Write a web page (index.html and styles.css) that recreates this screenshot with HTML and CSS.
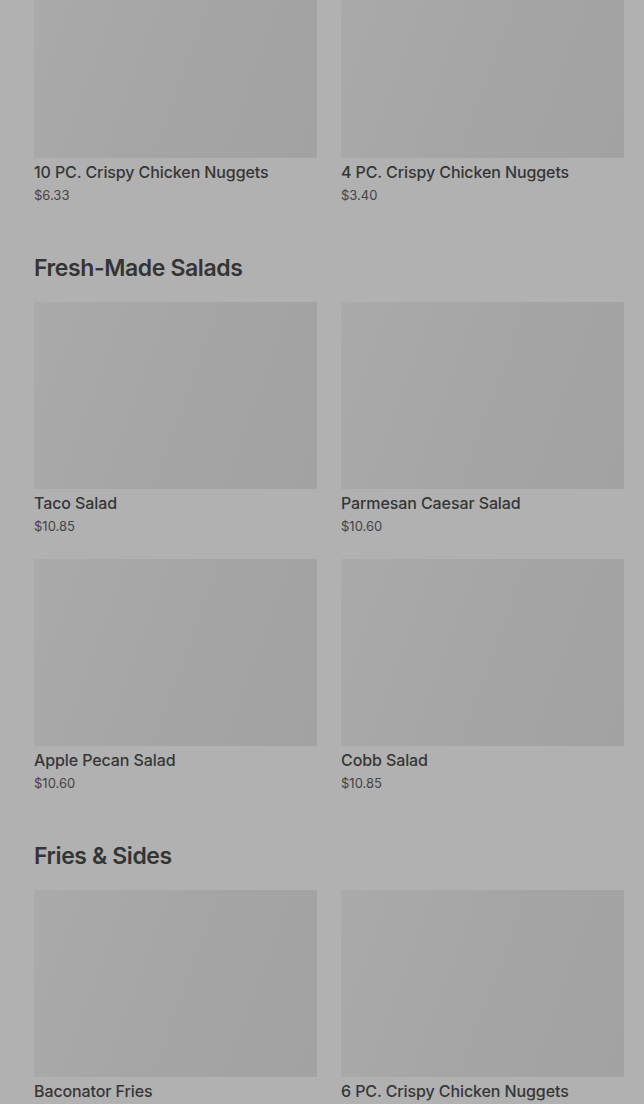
FILE: index.html
```html
<!DOCTYPE html>
<html lang="en">
<head>
    <meta charset="UTF-8">
    <meta name="viewport" content="width=device-width, initial-scale=1.0">
    <title>Menu</title>
    <link rel="stylesheet" href="styles.css">
</head>
<body>
    <!-- Menu list, scrolled part way down -->
    <div class="menu">
        <div class="grid first">
            <div class="item">
                <div class="thumb"></div>
                <div class="name">10 PC. Crispy Chicken Nuggets</div>
                <div class="price">$6.33</div>
            </div>
            <div class="item">
                <div class="thumb"></div>
                <div class="name">4 PC. Crispy Chicken Nuggets</div>
                <div class="price">$3.40</div>
            </div>
        </div>

        <h2 class="section-title">Fresh-Made Salads</h2>
        <div class="grid">
            <div class="item">
                <div class="thumb"></div>
                <div class="name">Taco Salad</div>
                <div class="price">$10.85</div>
            </div>
            <div class="item">
                <div class="thumb"></div>
                <div class="name">Parmesan Caesar Salad</div>
                <div class="price">$10.60</div>
            </div>
            <div class="item">
                <div class="thumb"></div>
                <div class="name">Apple Pecan Salad</div>
                <div class="price">$10.60</div>
            </div>
            <div class="item">
                <div class="thumb"></div>
                <div class="name">Cobb Salad</div>
                <div class="price">$10.85</div>
            </div>
        </div>

        <h2 class="section-title">Fries &amp; Sides</h2>
        <div class="grid">
            <div class="item">
                <div class="thumb"></div>
                <div class="name">Baconator Fries</div>
            </div>
            <div class="item">
                <div class="thumb"></div>
                <div class="name">6 PC. Crispy Chicken Nuggets</div>
            </div>
        </div>
    </div>
</body>
</html>
```

FILE: styles.css
```css
/* Menu page under a dim overlay */
html, body {
    margin: 0;
    height: 100%;
    overflow: hidden;
}
body {
    background-color: #b1b1b1;
    font-family: Inter, Roboto, "Liberation Sans", sans-serif;
    color: #333;
}
.menu {
    padding: 0 20px 0 34px;
}
.grid {
    display: grid;
    grid-template-columns: 1fr 1fr;
    column-gap: 24px;
    row-gap: 23px;
}
.grid.first {
    margin-top: -29px;
}
.item {
    display: flex;
    flex-direction: column;
}
.thumb {
    height: 187px;
    background: linear-gradient(110deg, #aaaaaa 0%, #a5a5a5 50%, #a2a2a2 100%);
}
.name {
    margin-top: 3px;
    font-size: 16px;
    line-height: 22px;
    font-weight: 500;
    color: #363636;
    letter-spacing: -0.1px;
}
.price {
    margin-top: 2px;
    font-size: 13px;
    line-height: 20px;
    color: #444;
}
.section-title {
    margin: 49px 0 20px;
    font-size: 23px;
    line-height: 28px;
    font-weight: 600;
    color: #343434;
    letter-spacing: -0.4px;
}
```
